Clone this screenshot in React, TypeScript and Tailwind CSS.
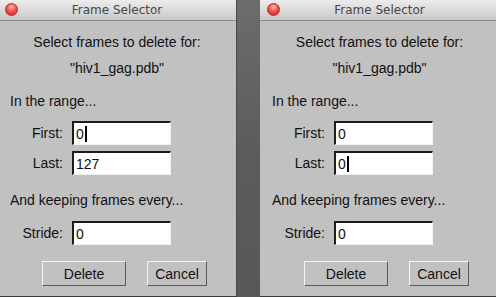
import React from "react";

type DialogProps = {
  first: string;
  last: string;
  stride: string;
  caret: "first" | "last";
  className?: string;
};

function Field({ label, value, caret }: { label: string; value: string; caret: boolean }) {
  return (
    <div className="flex items-center h-[24px]">
      <span className="w-[67px] text-right pr-[2px]">{label}</span>
      <div className="ml-[7px] w-[99px] h-[24px] bg-white border-t-2 border-l-2 border-t-[#1c1c1c] border-l-[#1c1c1c] border-b border-r border-b-[#f2f2f2] border-r-[#f2f2f2] flex items-center pl-[2px]">
        <span className="leading-[16px]">{value}</span>
        {caret && <span className="w-[2px] h-[16px] bg-black ml-[1px]" />}
      </div>
    </div>
  );
}

function Dialog({ first, last, stride, caret, className }: DialogProps) {
  return (
    <div
      className={`w-[239px] h-[297px] shrink-0 flex flex-col bg-[#c1c1c1] border-b border-b-[#3a3a3a] ${className ?? ""}`}
      style={{ fontFamily: '"Liberation Sans", Arial, sans-serif' }}
    >
      <div className="relative h-[21px] shrink-0 bg-gradient-to-b from-[#ececec] to-[#c9c9c9] border-b border-b-[#8a8a8a] flex items-center justify-center">
        <span
          className="absolute left-[7px] top-[3px] w-[13px] h-[13px] rounded-full border border-[#b0302c]"
          style={{
            background:
              "radial-gradient(circle at 50% 30%, #ffc0b8 0%, #f2544a 45%, #c8201a 100%)",
          }}
        />
        <span
          className="text-[12px] text-[#484848] leading-[16px]"
          style={{ fontFamily: '"DejaVu Sans", "Lucida Grande", sans-serif' }}
        >
          Frame Selector
        </span>
      </div>

      <div className="flex flex-col text-[14px] leading-[16px] text-[#111]">
        <div className="mt-[13px] text-center">Select frames to delete for:</div>
        <div className="mt-[10px] text-center">"hiv1_gag.pdb"</div>
        <div className="mt-[17px] pl-[12px]">In the range...</div>
        <div className="mt-[12px]">
          <Field label="First:" value={first} caret={caret === "first"} />
        </div>
        <div className="mt-[6px]">
          <Field label="Last:" value={last} caret={caret === "last"} />
        </div>
        <div className="mt-[17px] pl-[12px]">And keeping frames every...</div>
        <div className="mt-[13px]">
          <Field label="Stride:" value={stride} caret={false} />
        </div>
        <div className="mt-[16px] flex">
          <button className="ml-[44px] w-[84px] h-[25px] bg-[#c1c1c1] border border-t-[#f4f4f4] border-l-[#f4f4f4] border-b-[#5a5a5a] border-r-[#5a5a5a] text-[14px] leading-[16px] text-[#111]">
            Delete
          </button>
          <button className="ml-[21px] w-[60px] h-[25px] bg-[#c1c1c1] border border-t-[#f4f4f4] border-l-[#f4f4f4] border-b-[#5a5a5a] border-r-[#5a5a5a] text-[14px] leading-[16px] text-[#111]">
            Cancel
          </button>
        </div>
      </div>
    </div>
  );
}

export default function App() {
  return (
    <div className="w-[496px] h-[297px] overflow-hidden flex bg-[#5b5b5b]">
      <Dialog first="0" last="127" stride="0" caret="first" className="-ml-[2px] border-r border-r-[#4a4a4a]" />
      <div className="w-[23px] shrink-0 h-full bg-gradient-to-b from-[#6c6c6c] via-[#5c5c5c] to-[#575757]" />
      <Dialog first="0" last="0" stride="0" caret="last" />
    </div>
  );
}
